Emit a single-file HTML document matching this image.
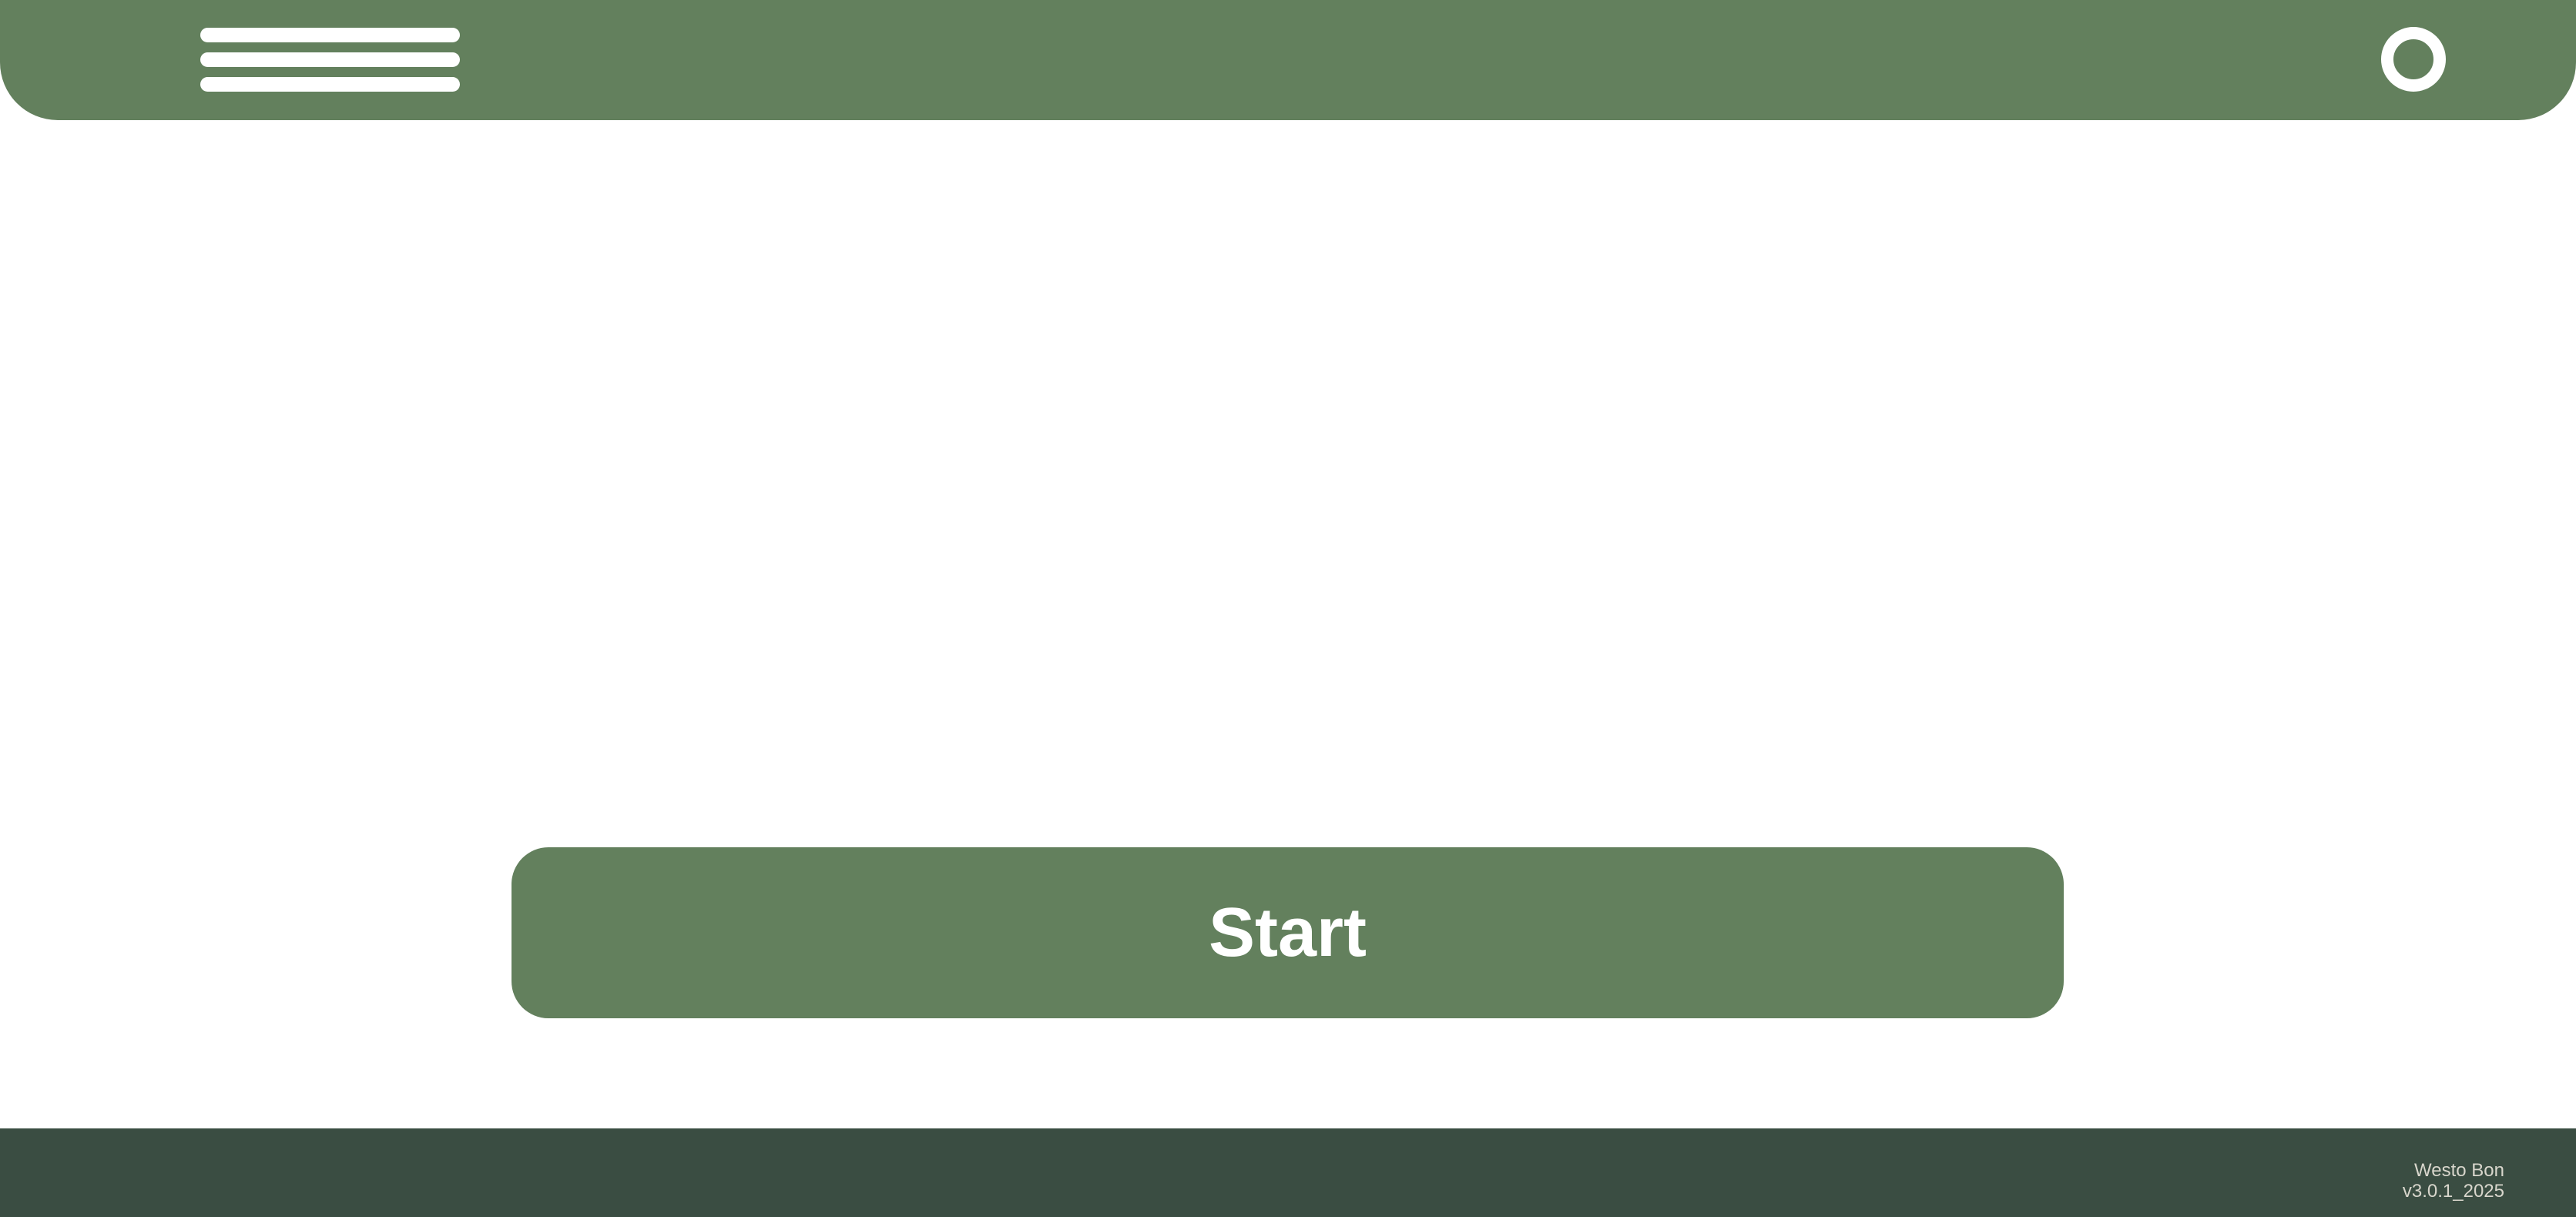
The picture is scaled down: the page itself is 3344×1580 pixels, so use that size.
<!DOCTYPE html>
<html><head><meta charset="utf-8"><style>
html,body{margin:0;padding:0;width:3344px;height:1580px;overflow:hidden;background:#fff;font-family:"Liberation Sans",sans-serif;position:relative}
.hdr{position:absolute;left:0;top:0;width:3344px;height:156px;background:#63805d;border-radius:0 0 75px 75px}
.bar{position:absolute;left:260px;width:337px;height:19px;background:#fff;border-radius:10px}
.ring{position:absolute;left:3091px;top:35px;width:52px;height:52px;border:16px solid #fff;border-radius:50%}
.btn{position:absolute;left:664px;top:1100px;width:2015px;height:222px;background:#63805d;border-radius:48px;color:#fff;font-weight:bold;font-size:90px;line-height:222px;text-align:center}
.ftr{position:absolute;left:0;top:1465px;width:3344px;height:115px;background:#3a4d42}
.ver{position:absolute;right:93px;top:1506px;color:#d8d6cc;font-size:24px;line-height:27px;text-align:right}
</style></head><body>
<div class="hdr"></div>
<div class="bar" style="top:36px"></div>
<div class="bar" style="top:68px"></div>
<div class="bar" style="top:100px"></div>
<div class="ring"></div>
<div class="btn">Start</div>
<div class="ftr"></div>
<div class="ver">Westo Bon<br>v3.0.1_2025</div>
</body></html>
